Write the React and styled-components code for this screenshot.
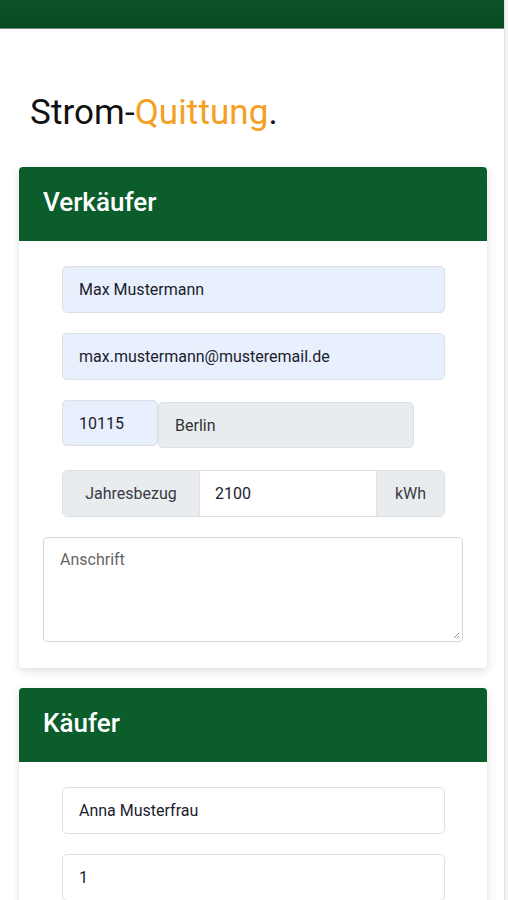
import React from "react";
import styled, { createGlobalStyle } from "styled-components";

const GlobalStyle = createGlobalStyle`
  html, body {
    margin: 0;
    padding: 0;
    background: #f3f3f3;
  }
  body {
    font-family: Roboto, "Liberation Sans", sans-serif;
    color: #1c1c2e;
  }
`;

const Page = styled.div`
  width: 504px;
  min-height: 900px;
  background: #fff;
  border-right: 1px solid #e6e6e6;
  overflow: hidden;
`;

const TopBar = styled.div`
  height: 28px;
  background: linear-gradient(#0b5427, #084a21);
  border-bottom: 1px solid #6f8f77;
`;

const Content = styled.main`
  padding: 0 17px 0 19px;
`;

const Title = styled.h1`
  margin: 63px 0 0 11px;
  height: 75px;
  font-size: 35px;
  font-weight: 400;
  letter-spacing: 0.1px;
  color: #111;
  span {
    color: #f5a01e;
  }
`;

const Card = styled.section`
  background: #fff;
  border-radius: 4px;
  box-shadow: 0 3px 10px rgba(0, 0, 0, 0.13);
  margin-bottom: 20px;
  overflow: hidden;
`;

const CardHeader = styled.h2`
  margin: 0;
  height: 74px;
  display: flex;
  align-items: center;
  padding: 0 24px 4px;
  box-sizing: border-box;
  background: #0b5e2c;
  color: #fff;
  font-size: 26px;
  font-weight: 500;
`;

const CardBody = styled.div`
  padding: 25px 24px 26px;
  display: flex;
  flex-direction: column;
  gap: 20px;
`;

const Row = styled.div`
  margin: 0 18px 0 19px;
  margin-top: ${({ $top }) => $top || 0}px;
  display: flex;
  align-items: flex-start;
`;

const Input = styled.div`
  box-sizing: border-box;
  height: ${({ $h }) => $h || 47}px;
  width: ${({ $w }) => ($w ? `${$w}px` : "100%")};
  margin-top: ${({ $top }) => $top || 0}px;
  display: flex;
  align-items: center;
  padding: 0 16px;
  font-size: 16px;
  color: ${({ $muted }) => ($muted ? "#333" : "#1c1c2e")};
  background: ${({ $variant }) =>
    $variant === "filled" ? "#e8f0fe" : $variant === "disabled" ? "#e9ecef" : "#fff"};
  border: 1px solid #dcdfe3;
  border-radius: 5px;
`;

const Group = styled.div`
  flex: 1;
  display: flex;
  height: 47px;
  border: 1px solid #dcdfe3;
  border-radius: 5px;
  overflow: hidden;
  box-sizing: border-box;
`;

const Addon = styled.div`
  width: ${({ $w }) => $w}px;
  display: flex;
  align-items: center;
  justify-content: center;
  background: #e9ecef;
  color: #3a3a44;
  font-size: 16px;
`;

const GroupField = styled.div`
  flex: 1;
  display: flex;
  align-items: center;
  padding: 0 15px;
  background: #fff;
  font-size: 16px;
  border-left: 1px solid #dcdfe3;
  border-right: 1px solid #dcdfe3;
`;

const TextArea = styled.div`
  position: relative;
  box-sizing: border-box;
  height: 105px;
  padding: 12px 16px;
  border: 1px solid #d6d8db;
  border-radius: 4px;
  color: #666;
  font-size: 16px;
`;

const Grip = styled.svg`
  position: absolute;
  right: 2px;
  bottom: 2px;
`;

export default function App() {
  return (
    <Page>
      <GlobalStyle />
      <TopBar />
      <Content>
        <Title>
          Strom-<span>Quittung</span>.
        </Title>

        <Card>
          <CardHeader>Verkäufer</CardHeader>
          <CardBody>
            <Row>
              <Input $variant="filled">Max Mustermann</Input>
            </Row>
            <Row>
              <Input $variant="filled">max.mustermann@musteremail.de</Input>
            </Row>
            <Row>
              <Input $variant="filled" $w={96} $h={46}>
                10115
              </Input>
              <Input $variant="disabled" $w={256} $h={46} $top={2} $muted>
                Berlin
              </Input>
            </Row>
            <Row $top={2}>
              <Group>
                <Addon $w={136}>Jahresbezug</Addon>
                <GroupField>2100</GroupField>
                <Addon $w={67}>kWh</Addon>
              </Group>
            </Row>
            <TextArea>
              Anschrift
              <Grip width="7" height="7" viewBox="0 0 7 7">
                <path d="M6 1L1 6M6 4L4 6" stroke="#999" strokeWidth="1" />
              </Grip>
            </TextArea>
          </CardBody>
        </Card>

        <Card>
          <CardHeader>Käufer</CardHeader>
          <CardBody>
            <Row>
              <Input>Anna Musterfrau</Input>
            </Row>
            <Row>
              <Input>1</Input>
            </Row>
          </CardBody>
        </Card>
      </Content>
    </Page>
  );
}
